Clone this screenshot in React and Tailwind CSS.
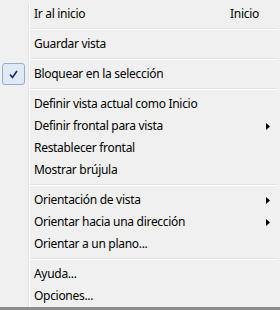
import React from "react";

const font = { fontFamily: '"Segoe UI", "Noto Sans", "Open Sans", sans-serif' };

function Arrow() {
  return (
    <svg width="4" height="7" viewBox="0 0 4 7" className="block">
      <path d="M0 0 L4 3.5 L0 7 Z" fill="#000" />
    </svg>
  );
}

function Item({ label, shortcut, sub, checked }) {
  return (
    <div className="flex h-[22px] items-stretch">
      <div className="w-[28px] shrink-0 flex items-center">
        {checked && (
          <div className="ml-[2px] w-[23px] h-[22px] rounded-[3px] border border-solid border-[#93acd2] bg-[#e1e9f5] flex items-center justify-center">
            <svg width="9" height="9" viewBox="0 0 9 9">
              <path d="M1 4.5 L3.5 7.5 L8 1" stroke="#16267a" strokeWidth="1.6" fill="none" />
            </svg>
          </div>
        )}
      </div>
      <div className="w-[2px] shrink-0 border-l border-[#e2e3e3] bg-white" />
      <div className="flex-1 flex items-center pl-[4px] pr-[10px] text-[12px] tracking-[-0.3px] text-black">
        <span className="flex-1 whitespace-nowrap">{label}</span>
        {shortcut && <span className="mr-[11px]">{shortcut}</span>}
        {sub && <Arrow />}
      </div>
    </div>
  );
}

function Sep() {
  return (
    <div className="flex h-[8px] items-stretch">
      <div className="w-[28px] shrink-0" />
      <div className="w-[2px] shrink-0 border-l border-[#e2e3e3] bg-white" />
      <div className="flex-1 flex flex-col justify-center pr-[2px]">
        <div className="h-px bg-[#e2e3e3]" />
        <div className="h-px bg-white" />
      </div>
    </div>
  );
}

export default function App() {
  return (
    <div
      className="w-[280px] h-[310px] bg-[#f0f0f0] flex flex-col pt-[3px] border-b-[3px] border-[#8c8c8c] overflow-hidden"
      style={font}
    >
      <Item label="Ir al inicio" shortcut="Inicio" />
      <Sep />
      <Item label="Guardar vista" />
      <Sep />
      <Item label="Bloquear en la selección" checked />
      <Sep />
      <Item label="Definir vista actual como Inicio" />
      <Item label="Definir frontal para vista" sub />
      <Item label="Restablecer frontal" />
      <Item label="Mostrar brújula" />
      <Sep />
      <Item label="Orientación de vista" sub />
      <Item label="Orientar hacia una dirección" sub />
      <Item label="Orientar a un plano..." />
      <Sep />
      <Item label="Ayuda..." />
      <Item label="Opciones..." />
    </div>
  );
}
